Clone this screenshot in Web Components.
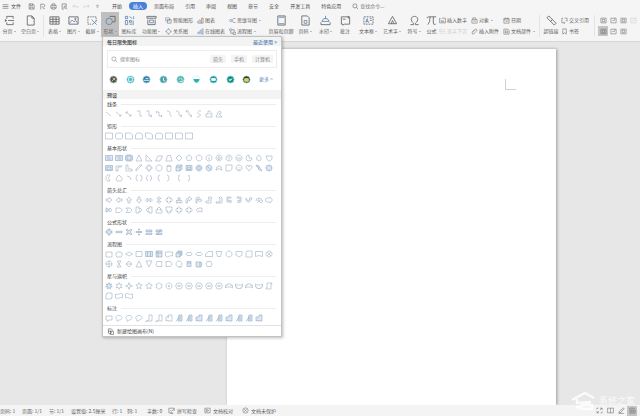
<!DOCTYPE html>
<html lang="zh-CN">
<head>
<meta charset="utf-8">
<title>文档</title>
<style>
html,body{margin:0;height:100%}
body{font:5px/8px "Noto Sans CJK SC",sans-serif;color:#444;overflow:hidden}
</style>
</head>
<body>
<writer-app></writer-app>
<script>
const define=(name,html)=>customElements.define(name,class extends HTMLElement{
  connectedCallback(){
    if(this.shadowRoot)return;
    const t=document.createElement('template');
    t.innerHTML=typeof html==='function'?html(this):html;
    this.attachShadow({mode:'open'}).append(t.content.cloneNode(true));
  }
});
const base='*,:host{box-sizing:border-box}button{font:inherit;color:inherit;background:none;border:0;padding:0;margin:0;white-space:nowrap;text-align:left}';

/* Toolbar icons, 12 x 12 grid */
const box='M1.5 2h9v8h-9z';
const icons={
  menu:'<path d="M1 3h10M1 6h10M1 9h10"/>',
  save:'<path d="M2 1.5h6.5l2 2v7H2zM4 1.5v3h4v-3M4 10V7h4.500v3"/>',
  exportp:'<path d="M3 11V2h4c4 0 4 5 0 5H5M7 9l3 1"/>',
  print:'<path d="M3.500 4V1.500h5V4M3.500 9H1.500V4h9v5h-2M3.500 7h5v3.500h-5z"/>',
  preview:'<path d="M5 10.500H2v-9h7v4"/><circle cx="7" cy="7" r="2"/><path d="M8.500 8.500l2 2"/>',
  undo:'<path d="M4 3L1.500 5.500 4 8M2 5.500h6q3 0 2 3"/>',
  redo:'<path d="M8 3l2.500 2.500L8 8M10 5.500H4q-3 0-2 3"/>',
  more:'<path d="M4 4h4M4 6l2 2 2-2"/>',
  search:'<circle cx="5" cy="5" r="3.500"/><path d="M7.500 7.500l3 3"/>',
  pagebreak:'<path d="M3 4V1.500h7V4M3 8v2.500h7V8M1 6h2M4.500 6H11M1 4.500L2.500 6 1 7.500"/>',
  blank:'<path d="M2.500 1h5l2.500 2.500V11H2.500zM7.500 1v2.500H10"/>',
  table:'<path d="M1 2h10v8H1zM1 4.700h10M1 7.300h10M4.300 2v8M7.700 2v8"/>',
  image:'<path d="M1 2h10v8H1z"/><path class="b" d="M1.500 9l3-3.500 2 2L8.500 6l2 3"/><circle cx="8" cy="4.200" r=".7"/>',
  crop:'<path stroke-dasharray="1.500 1" d="M1 2h9v5M1 2v8h5"/><path class="b" d="M5 5l5.500 5.500M10.500 6L6 10.500"/>',
  shapes:'<circle class="b" cx="4.500" cy="7" r="3.500"/><path d="M5 1.500h6v6H8"/>',
  library:'<path class="b" d="M1.500 1.500h2.500v2.500H1.500zM6 1.500l3 2.500M10.500 1.500v3M1.500 6h2.500v4.500H1.500zM6 6h2v2H6zM10 6v5M6 10h3"/>',
  func:'<path d="M1 1.500h10v2H1zM2 5v5.500h8V5"/><path class="b" d="M4 5.500h4v3H4z"/>',
  smart:'<path class="b" d="M1 1.500h7v5H1z"/><path d="M4 4.500h6.500v6H4z"/>',
  relation:'<circle class="b" cx="6" cy="6" r="3.500"/><path d="M5 1.500h2M1.500 5v2M10.500 5v2M5 10.500h2"/>',
  chart:'<path d="M1.500 10.500h9V2h-2.500v8.500M5.500 10V5H4M1.500 10.500V7H4"/>',
  chartb:'<path class="b" d="M1.500 10.500V7h2v3.500M5 10.500V4h2v6.500M8.500 10.500V1.500h2v9z"/>',
  mind:'<circle class="b" cx="3" cy="6" r="2"/><path d="M5 6l3-3.500h3M5 6l3 3.500h3"/>',
  flow:'<path class="b" d="M1 1.500h4v3H1z"/><path d="M3 5v4h4M5 3h4v3M7 7h4v4H7z"/>',
  header:'<path d="M2 1h8v10H2z"/><path class="b" d="M3 2.500h6M3 9.500h6"/>',
  pageno:'<path d="M2 1h6l2 2v8H2z"/><path class="b" d="M4.500 6h3v3h-3z"/>',
  water:'<path class="b" d="M2 7h8L8 4H4zM6 1v3"/><path d="M1 8v2.500h10V8"/>',
  comment:'<path d="M1.500 2h9v8H5L3 11v-1H1.500zM3 4.500h3M9 1v3"/>',
  textbox:'<path stroke-dasharray="2 1" d="M1 2h10v8H1z"/><path class="b" d="M3 8.500L4.500 4 6 8.500M3.500 7h2M7.500 4h2M7.500 6h2"/>',
  wordart:'<path d="M1.500 9.500L6 1.500l4.500 8zM4.500 9.500L6 6l1.500 3.500"/>',
  omega:'<path d="M1.500 10.500H5V9C1 6 2 1.500 6 1.500S11 6 7 9v1.500h3.500"/>',
  pi:'<path d="M1 3.500Q1.500 2 3 2h8M4.500 2q0 6-2.500 8.500M8 2v7q0 2 2.500 1"/>',
  num:'<path d="M1 3h2M1 2v8h10V2H5M3 8h6M4 5v2M7 5v2"/>',
  lines:'<path d="M1 2h4v4H1zM7 3h4M7 6h4M1 9h10"/>',
  object:'<path d="M1.500 4.500h9v6h-9zM3 4V1.500h5V4M4 7h4"/>',
  clip:'<path d="M2.500 7l4-4.500c2-2 5 .5 3 2.500L5 10C3 11.500.5 9 2.500 7l4-4"/>',
  date:'<path d="M1.500 2.500h9v8h-9zM1.500 5h9M4 1v2.500M8 1v2.500M5 7.500h3"/>',
  parts:'<path d="M1.500 2h7l2 2v6.500h-9zM4 5h4v3H4z"/>',
  link:'<path d="M1 3l2-2 4 4-2 2zM5 7l2-2 4 4-2 2z"/>',
  cross:'<path d="M3.500 2H1.500v8h4M6 2h4.500v5M8.500 5.500l2 2M5 8l2 2-2 1.500"/>',
  mark:'<path d="M3 1.500h6v9L6 8l-3 2.500z"/>',
  cell:'<path d="'+box+'M4 4h4v4H4z"/>',
  cell2:'<path d="'+box+'M4 6h4M8 2v3"/>',
  spell:'<path d="M8 10H1.500V2h9v5M4 5.500l2 2L10.500 3M4 11h5"/>',
  proof:'<path d="'+box+'M4 4l4 2-4 2z"/>',
  guard:'<circle cx="6" cy="6" r="4.500"/><path d="M4 4l4 4M8 4L4 8"/>',
  full:'<path d="M7 2h3.500v3M5 10H1.500V7M10 2L7 5M2 10l3-3M1.500 4V2H4M10.500 8v2H8"/>',
  book:'<path d="M1 2h10v8H1zM6 2v8"/>',
  pen:'<path d="M2 8l7-6.500 1.500 1.500L4 10H1.500zM1 11h9"/>',
  canvas:'<path d="M2.500 8V1.500h5L9 3v1.500"/><circle cx="5" cy="7.500" r="2.500"/><path d="M6 5.500h5V11H6z"/>'
};
define('ui-icon',el=>`<style>:host{display:inline-block;flex:none;width:7px;height:7px}svg{display:block;width:100%;height:100%;fill:none;stroke:currentColor;stroke-width:.9}.b{stroke:#5f83ad}</style><svg viewBox="0 0 12 12" aria-hidden="true">${icons[el.getAttribute('name')]||''}</svg>`);

define('tool-button',el=>`<style>${base}
:host{display:block;flex:none;height:25px;color:#606060}
:host([on]){background:#bfbfbf}
button{width:100%;height:100%;display:flex;flex-direction:column;align-items:center;padding-top:3px}
ui-icon{width:11px;height:11px;margin-bottom:1px}
.l{display:flex;align-items:center;gap:1px}
i{border:1px solid transparent;border-top-color:#888;border-bottom:0}</style>
<button type="button"><ui-icon name="${el.getAttribute('icon')}"></ui-icon><span class="l"><slot></slot>${el.hasAttribute('menu')?'<i></i>':''}</span></button>`);
define('tool-row',el=>`<style>${base}
:host{display:block;color:#606060}:host([off]){color:#ccc}
button{display:flex;align-items:center;height:10px;gap:1px}
i{border:1px solid transparent;border-top-color:#888;border-bottom:0;margin-left:1px}</style>
<button type="button"><ui-icon name="${el.getAttribute('icon')}"></ui-icon><slot></slot>${el.hasAttribute('menu')?'<i></i>':''}</button>`);
define('tool-stack',`<style>:host{display:grid;grid-auto-rows:10px;row-gap:1px;padding-top:3px;flex:none;align-content:start}</style><slot></slot>`);

define('menu-bar',`<style>${base}
:host{display:flex;align-items:center;height:12px;color:#4c4c4c;background:#f5f5f5;padding-left:2px}
.file{display:flex;align-items:center;gap:2px;width:26px}
.quick{display:flex;gap:4px;width:84px;color:#555}
.off{color:#bbb}
nav{display:flex;align-items:center;gap:11px}
nav button.on{background:#4a80d9;color:#fff;border-radius:4px;padding:0 4px;margin:0 -4px}
label{display:flex;align-items:center;gap:1px;margin-left:11px}
input{font:inherit;width:40px;border:0;padding:0;background:none;height:8px}
input::placeholder{color:#777;opacity:1}
</style>
<button class="file" type="button"><ui-icon name="menu"></ui-icon>文件</button>
<div class="quick"><ui-icon name="save"></ui-icon><ui-icon name="exportp"></ui-icon><ui-icon name="print"></ui-icon><ui-icon name="preview"></ui-icon><ui-icon class="off" name="undo"></ui-icon><ui-icon class="off" name="redo"></ui-icon><ui-icon name="more"></ui-icon></div>
<nav><button>开始</button><button class="on">插入</button><button>页面布局</button><button>引用</button><button>审阅</button><button>视图</button><button>章节</button><button>安全</button><button>开发工具</button><button>特色应用</button></nav>
<label><ui-icon name="search"></ui-icon><input aria-label="查找命令" placeholder="查找命令..."></label>`);

define('tool-ribbon',`<style>${base}
:host{display:flex;height:30px;background:#f5f5f5;border-bottom:1px solid #d6d6d6;overflow:hidden;white-space:nowrap}
.sep{flex:none;width:1px;height:22px;margin:3px 1px 0;background:#e4e4e4}
.w15{width:15px}.w17{width:17px}.w18{width:18px}.w19{width:19px}.w20{width:20px}.w22{width:22px}.w24{width:24px}.w32{width:32px}.w40{width:40px}
.group{margin-left:2px}.first{margin-left:4px}
.views{display:grid;grid-template-columns:repeat(4,10px);grid-auto-rows:10px;row-gap:1px;padding:3px 0 0 2px;color:#666;align-content:start}
.views button{display:grid;place-items:center}.views .on{background:#c4c4c4}.views .off{color:#ccc}
</style>
<tool-button class="w18" icon="pagebreak" menu>分页</tool-button><tool-button class="w24" icon="blank" menu>空白页</tool-button><span class="sep"></span>
<tool-button class="w19" icon="table" menu>表格</tool-button><tool-button class="w19" icon="image" menu>图片</tool-button><tool-button class="w18" icon="crop" menu>截屏</tool-button><tool-button class="w18" icon="shapes" on menu>形状</tool-button><tool-button class="w20" icon="library">图标库</tool-button><tool-button class="w24" icon="func" menu>功能图</tool-button>
<tool-stack class="w32 group"><tool-row icon="smart">智能图形</tool-row><tool-row icon="relation">关系图</tool-row></tool-stack>
<tool-stack class="w32"><tool-row icon="chart">图表</tool-row><tool-row icon="chartb">在线图表</tool-row></tool-stack>
<tool-stack class="w40"><tool-row icon="mind" menu>思维导图</tool-row><tool-row icon="flow" menu>流程图</tool-row></tool-stack>
<tool-button class="w24" icon="header">页眉和页脚</tool-button><tool-button class="w24" icon="pageno" menu>页码</tool-button><tool-button class="w17" icon="water" menu>水印</tool-button><tool-button class="w22" icon="comment">批注</tool-button>
<tool-button class="w24" icon="textbox" menu>文本框</tool-button><tool-button class="w24" icon="wordart" menu>艺术字</tool-button><tool-button class="w20" icon="omega" menu>符号</tool-button><tool-button class="w15" icon="pi">公式</tool-button>
<tool-stack class="w32"><tool-row icon="num">插入数字</tool-row><tool-row icon="lines" off>首字下沉</tool-row></tool-stack>
<tool-stack class="w32"><tool-row icon="object" menu>对象</tool-row><tool-row icon="clip">插入附件</tool-row></tool-stack>
<tool-stack class="w32"><tool-row icon="date">日期</tool-row><tool-row icon="parts" menu>文档部件</tool-row></tool-stack>
<span class="sep first"></span><tool-button class="w20" icon="link">超链接</tool-button>
<tool-stack class="w32"><tool-row icon="cross">交叉引用</tool-row><tool-row icon="mark">书签</tool-row></tool-stack><span class="sep"></span>
<div class="views"><button aria-label="视图一"><ui-icon name="cell"></ui-icon></button><button aria-label="视图二"><ui-icon name="cell2"></ui-icon></button><button aria-label="视图三"><ui-icon name="cell"></ui-icon></button><button class="off" aria-label="视图四"><ui-icon name="cell2"></ui-icon></button><button class="on" aria-label="视图五"><ui-icon name="cell"></ui-icon></button><button aria-label="视图六"><ui-icon name="cell2"></ui-icon></button><button aria-label="视图七"><ui-icon name="cell"></ui-icon></button></div>`);

/* Gallery shapes, 10 x 10 grid; a leading * gives a tinted fill */
const C='M5 2a3 3 0 1 0 .01 0z',R='M2 3h6v5H2z';
const poly=(n,r=3,s=0)=>'M'+Array.from({length:n},(_,i)=>{const a=(i+s)*2*Math.PI/n-Math.PI/2;return (5+r*Math.cos(a)).toFixed(2)+' '+(5+r*Math.sin(a)).toFixed(2)}).join('L')+'z';
const star=(n,q)=>'M'+Array.from({length:n*2},(_,i)=>{const a=i*Math.PI/n-Math.PI/2,r=i%2?q:3.400;return (5+r*Math.cos(a)).toFixed(2)+' '+(5+r*Math.sin(a)).toFixed(2)}).join('L')+'z';
const right='M2 4h3V2.500L8 5 5 7.500V6H2z',left='M8 4H5V2.500L2 5l3 2.500V6h3z',up='M4 8V5H2.500L5 2l2.500 3H6v3z',down='M4 2v3H2.500L5 8l2.500-3H6V2z';
const quad='M5 1.500L7 3.500H6V4h.5V3L8.500 5l-2 2V6H6v.5h1L5 8.500l-2-2h1V6h-.5v1L1.500 5l2-2v1H4v-.5H3z';
const tri='M5 2l3 6H2z',diamond='M5 2l3 3-3 3-3-3z',plus='M4 2h2v2h2v2H6v2H4V6H2V4h2z';
const bend='M2 8V5q0-2 3-2V1.500L8 4 5 6V4.500q-1.500 0-1.500 1.500v2z';
const round='M5 2.500c4 0 4 4.500 0 4.500L3 8.500V6.500C.5 5 2 2.500 5 2.500z',bub='M2 3h6v4H5L3.500 8.500V7H2z';
const note='M5 2h3v6H3l-1.500.5L5 7z',noteb='*M5 2h3v6H4zM2 8.500L5 4M6 3v4';
const burst=star(14,2.900)+'M4 4v2M6 4v2M4 5h2';
const S={
 lines:['M2 3l5 4','M2 3l5 4M7 5.500V7H5','M2 3l5 4M7 5.500V7H5M2 4.500V3h2','M3 2h3v5h2','M2 2h3v5h3M6.500 5.500L8 7 6.500 8','M2 3h3v4h3M3 2L2 3l1 1M7 6l1 1-1 1','M3 2c6 0 0 5 5 5','M2 2c6 0 0 5 6 5M6.500 5.500L8 7 6.500 8','M2 2c6 0 0 5 6 5M3.500 1L2 2l1 1.500M6.500 5.500L8 7 6.500 8','M7 2C3 1 3 5 5 5s2 3-2 3','M2 5h2V2h2l2 3v3H2zM5 5h2','M2 8l2-5q2-2 3 0T5 5l3 3z'],
 rects:['M1.500 2h7v6h-7z','M3 2h4.500l1 1v4l-1 1H3L1.500 7V3z','M1.500 2h5l2 2v4h-7z','M3 2h4l1.500 2v4h-7V4z','M1.500 2h5l2 2v4h-5l-2-2z','M1.500 8V4q0-2 3.500-2t3.500 2v4z','M1.500 2h7v6h-7z','M1.500 2h6q1 0 1 1v5h-7z','M1.500 2h7v6h-7z'],
 basic:['*M1.500 2.500h7v5h-7zM3 4h3M3 6h4','*M1.500 2.500h7v5h-7zM3 4h4M4 6h3','*M2.500 2h5L8.500 3v4l-1 1h-5l-1-1V3zM3 3h4v4H3z',tri,'M2 2v6h6z','M4 3h4.500L6 8H1.500z','M3.500 2.500h3L8 8H2z',diamond,poly(5),poly(8,3,.5),C+'M5 4v3',C+'M4 4h2v2.500H4z',C+'M3.500 4h3M4 6h2',C+'M4 4v3M6 4v3','M5 2a3 3 0 1 0 3 3H5z','M5 2Q1 4 3 7q3 2 4 0T5 2z','M2 3h6v3q-3 4-5 0z',
  '*M1.500 2.500h7v5h-7zM3 4h4v3H3z','M2 8V3h6l-1 1H4v4z','M2 2h2v4h4v2H2z','M2 8V6l4-4h2z',plus,poly(8,3.200,.5),'M3 3q2-2 4 0v5q-2 1-4 0zM3 3q2 1 4 0','*M2 4l1-2h5v4L6 8H2zM2 4h4v4M6 4l2-2','*M2 2.500h6v5H2zM3.500 4h3v2.500h-3z','*'+C+'M5 3.500a1.500 1.500 0 1 0 .01 0z','*'+C+'M3 3l4 4','M2 7q0-4 3-4t3 4H6.500Q6 5 5 5T3.500 7z','M2 2h6v4L6 8H2z',C+'M4 4v.5M6 4v.5M3.500 6q1.500 1.500 3 0','M5 8L2.500 5Q1 3 3 2.500T5 4q0-2 2-1.500T7.500 5z','*M2 2l3 1 1 2 2 3-4-2 1-1-2-1z','*'+star(8,2.200),
  'M6 2Q2 1 2 5t4 3Q3 5 6 2z','M5 2l2 2q3 2 0 4H3q-2-2 0-4z','M3 3q4 0 4 4','M4 2q-2 0-2 3t2 3M6 2q2 0 2 3T6 8','M4 2Q3 2 3 4L2 5l1 1q0 2 1 2M6 2q1 0 1 2l1 1-1 1q0 2-1 2','M6 2Q4 2 4 5t2 3','M3 2q2 0 2 3T3 8','M6 2Q4 2 5 4L4 5l1 1q-1 2 1 2','M4 2q2 0 1 2l1 1-1 1q1 2-1 2'],
 arrows:[right,left,up,down,'M1.500 5L3.500 3v1.300h3V3l2 2-2 2V5.700h-3V7z','M5 1.500L7 3.500H5.700v3H7L5 8.500 3 6.500h1.300v-3H3z',quad,'M2 7l1-2v1h1.500V4h-1L5 2l1.500 2h-1v2H7V5l1.500 2L7 8.500v-1H3v1z',bend,'M2 8V4q0-2 2-2t2 2v1h2L6 7 4 5h1V4H3v4z','M2 6h3V3H4l2-1.500L8 3H7v5H2z','M2 7h4V3H5l1.500-1.500L8 3v5H2z','M7 2H3v5h3v1l2-1.500L6 5v1H4V3h3z','M3 2h4v5H5v1L3 6.500 5 5v1h1V3H3z','M2 3q2 5 4 1H5l2-2 1 2H7Q5 10 2 5z','M2 6q0-3 3-3t3 3h1L7 8 5 6h1q0-2-2-1v3','M1.500 4L3 3h3V2l2.500 3L6 8V7H3L1.500 6z',
  'M2 3v4h1V3zM4 3v4M5 4h1V3l2 2-2 2V6H5z','M2 3h4l2.500 2L6 7.500H2z','M2 3h4l2 2-2 2.500H2L4 5z','M2 2h3v2h1V3l2 2-2 2V6H5v2H2z','M8 2H5v2H4V3L2 5l2 2V6h1v2h3z','M2 8V5h2V4H3l2-2 2 2H6v1h2v3z','M2 2v4h2v1H3l2 1.500L7 7H6V6h2V2z',quad,quad,'M2 6q0-3 4-3h2v4L6 6H4v2'],
 math:['*'+plus,'*M2 4.300h6v1.400H2z','*M2 3l1-1 2 2 2-2 1 1-2 2 2 2-1 1-2-2-2 2-1-1 2-2z','*M2 4.500h6v1H2zM4.500 2h1v1h-1zM4.500 7h1v1h-1z','*M2 3h6v1.500H2zM2 6h6v1.500H2z','*M2 3h6v1.500H2zM2 6h6v1.500H2zM6.500 2l-3 6'],
 flow:[R,'M3 3h4l1 1v3L7 8H3L2 7V4z','M5 3l3.500 2L5 7 1.500 5z','M2 2.500h6v5H2z','*M1.500 2.500h7v5h-7zM3.500 2.500v5M6.500 2.500v5','*M2 2h6v6H2zM2 4h6M4 2v6','M1.500 3h7v4q-2-1-3.500.5T1.500 7z','*M2 4h4v4H2zM3 4V3h4v4H6M4 3V2h4v4H7','M3 3.500h4Q9 5 7 6.500H3Q1 5 3 3.500z','M3 3.500h4L8.500 5 7 6.500H3L1.500 5z','M1.500 5l3-2.500h4v5h-7z','M2 2.500h6L6.500 7.500h-3z',C,'M2 2.500h6V6L5 8 2 6z','M3 2h5v6H2V3.500z','M1.500 2.500h7v5L5 6.500l-3.500 1z',C+'M3 3l4 4M7 3L3 7',
  C+'M5 2v6M2 5h6','M3 2h4L3 8h4z',diamond+'M2 5h6',tri,'M2 2h6L5 8z','M3 2.500h5q-1 2 0 5H3q-2-2 0-5z','M2 2.500h4q4 2.500 0 5H2z',C+'M5 8h3','*M3 2.500h4v5H3zM3 4h4','*M2 3h5l1 2-1 3H2zM6 3v5','M3 2.500h4q2 2.500 0 5H3q-2-2.500 0-5z'],
 stars:['*'+star(7,1.700),star(6,1.700),star(4,1.200),star(5,1.500),star(5,1.800),star(6,2.500),C+'M4.500 4.500h1v1h-1z',burst,burst,burst,burst,burst,'M1.500 7V4.500H3V3h4v1.500h1.500V7L7 6H3z','M1.500 3L3 4h4l1.500-1v3H7v1.500H3V6H1.500z','M1.500 7V4.500H3V3h4v1.500h1.500V7L7 6H3z','M1.500 3L3 4h4l1.500-1v3H7v1.500H3V6H1.500z','M3 2h5v1H7v5H2V7h1z','M2 3h1V2h5v5H7v1H2z','M1.500 3q2 1 3.500 0t3.500 0v4q-2-1-3.500 0t-3.500 0z','M1.500 3q2-1 3.500 0t3.500 0v4q-2 1-3.500 0t-3.500 0z'],
 calls:[bub,round,round,round,note,note,'M4 4V2h4v6H4V7L2 8V4h3z',noteb,noteb,'*M5 2h3v6H4V7L2 8V4h3z',noteb,noteb,'*M5 2h3v6H4V7L2 8V4h3z',noteb,noteb,'*M5 2h3v6H4V7L2 8V4h3z']
};
define('shape-section',el=>{
  const name=el.getAttribute('label');
  return `<style>${base}
:host{display:block;padding:0 5px 2px 1px}
h3{font:inherit;margin:0;height:10px;display:flex;align-items:center;gap:4px;padding-left:3px;color:#444}
h3::after{content:"";flex:1;height:1px;background:#ededed}
div{display:grid;grid-template-columns:repeat(17,10px);grid-auto-rows:10px}
svg{display:block;width:10px;height:10px;fill:#fff;stroke:#9fb0c1;stroke-width:.6}.t{fill:#dde8f2;stroke:#8ea8c2}.n{fill:none}
</style><h3>${name}</h3><div>${S[el.getAttribute('kind')].map((p,i)=>`<button type="button" aria-label="${name} ${i+1}"><svg viewBox="0 0 10 10" class="${p[0]==='*'?'t':p.includes('z')?'':'n'}"><path d="${p.replace('*','')}"/></svg></button>`).join('')}</div>`});

const marks=[['#5b5346','M3 7l4-4M4 3l3 3','#d8cba5'],['#39b3c4','M3 3h4v4H3z','#e8ffff'],['#3b7fa8','M2 6h6M4 4h3','#d8f0ff'],['#4a9fae','M5 3v3l2 1','#fff'],['#4cb3ad','M3 5q2-3 4 0T4 7','#e8fff8'],['#fff','M2 5h6q-1 3-3 3T2 5z','#29aeb4'],['#149c9f','M3 4h4v2H3z','#fff'],['#168b84','M3 5l1.500 1.500L7 4','#9ff'],['#34382a','M3 4h4v3H3z','#cddb6b']];
define('shape-panel',`<style>${base}
:host{display:block;background:#fff;border:1px solid #c2c2c2;box-shadow:1px 1px 3px #0004;color:#444}
header,h2{display:flex;align-items:center;justify-content:space-between;background:#f3f3f3;height:9px;padding:0 4px;margin:0;font:inherit;font-weight:500}
a{color:#5c84b8;text-decoration:none}
.search{display:flex;align-items:center;gap:5px;border:1px solid #ececec;height:18px;margin:4px 4px 0;padding:0 3px}
.search label{display:flex;align-items:center;gap:2px;flex:1;min-width:0;color:#777}
.search input{font:inherit;border:0;padding:0;min-width:0;flex:1;height:8px;background:none}
input::placeholder{color:#888;opacity:1}
.search button{background:#f4f4f4;color:#888;padding:0 3px;border-radius:1px}
.daily{display:flex;align-items:center;justify-content:space-between;height:22px;padding:0 8px 0 6px}
.daily svg{display:block;width:9px;height:9px}
footer button{display:flex;align-items:center;gap:3px;height:10px;padding-left:4px}
footer{border-top:1px solid #e2e2e2}
</style>
<header><span>每日限免图标</span><a href="#recent">最近使用 &gt;</a></header>
<div class="search"><label><ui-icon name="search"></ui-icon><input aria-label="搜索图标" placeholder="搜索图标"></label><button>箭头</button><button>手机</button><button>计算机</button></div>
<div class="daily">${marks.map((m,i)=>`<button aria-label="图标 ${i+1}"><svg viewBox="0 0 10 10"><circle cx="5" cy="5" r="4" fill="${m[0]}" stroke="${m[0]==='#fff'?'#d5f0f0':'#a5d8da'}" stroke-width=".8"/><path d="${m[1]}" fill="${i>4?m[2]:'none'}" stroke="${m[2]}"/></svg></button>`).join('')}<a href="#more">更多 &gt;</a></div>
<h2>预设</h2>
<shape-section label="线条" kind="lines"></shape-section>
<shape-section label="矩形" kind="rects"></shape-section>
<shape-section label="基本形状" kind="basic"></shape-section>
<shape-section label="箭头总汇" kind="arrows"></shape-section>
<shape-section label="公式形状" kind="math"></shape-section>
<shape-section label="流程图" kind="flow"></shape-section>
<shape-section label="星与旗帜" kind="stars"></shape-section>
<shape-section label="标注" kind="calls"></shape-section>
<footer><button type="button"><ui-icon name="canvas"></ui-icon>新建绘图画布(N)</button></footer>`);

define('doc-canvas',`<style>
:host{display:flex;flex:1;min-height:0;background:#e7e7e7;padding:7px 84px 0 227px;overflow:hidden;box-sizing:border-box}
main{flex:1;background:#fff;box-shadow:1px 0 3px #0005;padding:30px 40px 0}
i{display:block;width:10px;height:10px;margin-left:auto;border:solid #d0d0d0;border-width:0 0 1px 1px}
</style><main><i></i></main>`);

define('status-bar',`<style>${base}
:host{display:flex;align-items:center;height:11px;background:#f4f4f4;color:#606060;white-space:nowrap}
.info{display:grid;grid-template-columns:22px 27px 22px 41px 15px 20px 21px 36px 38px auto}
.info button,.info span{display:flex;align-items:center;gap:2px}
nav{display:flex;gap:1px;width:46px;overflow:hidden;margin-left:auto}
nav button{flex:none;width:10px;height:10px;display:grid;place-items:center}.on{background:#c4c4c4}
</style>
<div class="info"><span>页码: 1</span><span>页面: 1/1</span><span>节: 1/1</span><span>设置值: 2.5厘米</span><span>行: 1</span><span>列: 1</span><span>字数: 0</span><button><ui-icon name="spell"></ui-icon>拼写检查</button><button><ui-icon name="proof"></ui-icon>文档校对</button><button><ui-icon name="guard"></ui-icon>文档未保护</button></div>
<nav><button aria-label="全屏"><ui-icon name="full"></ui-icon></button><button aria-label="阅读"><ui-icon name="book"></ui-icon></button><button aria-label="批阅"><ui-icon name="pen"></ui-icon></button><button class="on" aria-label="页面"><ui-icon name="parts"></ui-icon></button><button aria-label="大纲"><ui-icon name="cell"></ui-icon></button></nav>`);

define('site-mark',`<style>:host{display:flex;align-items:center;gap:4px;color:#fff;font-size:9px;line-height:12px;pointer-events:none;opacity:.85}svg{width:24px;height:19px}</style>
<svg viewBox="0 0 24 19" fill="none" stroke="#fff" stroke-width="2.500"><path d="M1 9L14 2l9 5M6 8v4l14-1M5 17l9-4 7 1v4H8"/></svg><span>系统之家</span>`);

define('writer-app',`<style>
:host{display:flex;flex-direction:column;height:100vh;position:relative;overflow:hidden}
shape-panel{position:absolute;left:102px;top:36px;width:180px}
site-mark{position:absolute;right:5px;bottom:6px}
</style><menu-bar></menu-bar><tool-ribbon></tool-ribbon><doc-canvas></doc-canvas><status-bar></status-bar><shape-panel></shape-panel><site-mark></site-mark>`);
</script>
</body>
</html>
